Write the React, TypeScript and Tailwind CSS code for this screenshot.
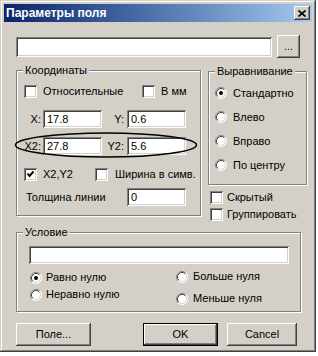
import React from "react";

const raised =
  "shadow-[inset_-1px_-1px_#404040,inset_1px_1px_#fff,inset_-2px_-2px_#808080,inset_2px_2px_#d4d0c8]";
const sunken =
  "shadow-[inset_1px_1px_#808080,inset_-1px_-1px_#fff,inset_2px_2px_#404040,inset_-2px_-2px_#d4d0c8]";

const CheckBox = ({ checked = false }: { checked?: boolean }) => (
  <div className={`relative w-[13px] h-[13px] shrink-0 bg-white ${sunken}`}>
    {checked && (
      <svg width="13" height="13" className="absolute left-0 top-0">
        <polyline points="3.5,5.5 5.5,8 9.5,3.5" fill="none" stroke="#000" strokeWidth="2" />
      </svg>
    )}
  </div>
);

const Radio = ({ checked = false }: { checked?: boolean }) => (
  <svg width="12" height="12" className="shrink-0">
    <circle cx="6" cy="6" r="5.5" fill="#fff" />
    <path d="M2.11 9.89 A5.5 5.5 0 0 1 9.89 2.11" fill="none" stroke="#808080" />
    <path d="M9.89 2.11 A5.5 5.5 0 0 1 2.11 9.89" fill="none" stroke="#fff" />
    <path d="M2.82 9.18 A4.5 4.5 0 0 1 9.18 2.82" fill="none" stroke="#404040" />
    <path d="M9.18 2.82 A4.5 4.5 0 0 1 2.82 9.18" fill="none" stroke="#d4d0c8" />
    {checked && <circle cx="6" cy="6" r="2" fill="#000" />}
  </svg>
);

const Field = ({ value = "", className = "" }: { value?: string; className?: string }) => (
  <div className={`h-[18px] shrink-0 bg-white pl-[4px] flex items-center leading-[13px] ${sunken} ${className}`}>
    {value}
  </div>
);

const Group = ({
  title,
  className,
  children,
}: {
  title: string;
  className: string;
  children?: React.ReactNode;
}) => (
  <div
    className={`relative shrink-0 border border-[#808080] shadow-[inset_1px_1px_#fff,1px_1px_#fff] ${className}`}
  >
    <span className="absolute left-[6px] -top-[8px] px-[2px] bg-[#d4d0c8] leading-[14px]">{title}</span>
    {children}
  </div>
);

const Button = ({
  label,
  className = "",
  primary = false,
}: {
  label: string;
  className?: string;
  primary?: boolean;
}) => (
  <div className={`h-[23px] shrink-0 ${primary ? "border border-black" : ""} ${className}`}>
    <div className={`w-full h-full flex items-center justify-center ${raised}`}>{label}</div>
  </div>
);

export default function App() {
  return (
    <div className="min-h-screen bg-white font-['Liberation_Sans',Arial,sans-serif] text-[11px] text-black whitespace-nowrap">
      <div
        className={`w-[316px] h-[352px] bg-[#d4d0c8] p-[4px] flex flex-col shadow-[inset_-1px_-1px_#404040,inset_1px_1px_#d4d0c8,inset_-2px_-2px_#808080,inset_2px_2px_#fff]`}
      >
        {/* title bar */}
        <div className="h-[18px] shrink-0 flex items-center justify-between pl-[2px] bg-gradient-to-r from-[#0a246a] to-[#a6caf0]">
          <span className="text-white font-bold text-[12px] leading-[14px]">Параметры поля</span>
          <div className={`w-[16px] h-[14px] mr-[2px] bg-[#d4d0c8] flex items-center justify-center ${raised}`}>
            <svg width="8" height="7">
              <path d="M0.5 0.5 L7.5 6.5 M7.5 0.5 L0.5 6.5" stroke="#000" strokeWidth="1.6" />
            </svg>
          </div>
        </div>

        <div className="flex flex-col px-[12px]">
          {/* name row */}
          <div className="flex items-center mt-[13px]">
            <Field className="w-[256px] h-[20px]" />
            <Button label="..." className="w-[23px] h-[21px] ml-[5px]" />
          </div>

          <div className="flex mt-[12px]">
            <Group title="Координаты" className="w-[185px] h-[146px] pl-[7px] pt-[14px]">
              <div className="flex items-center h-[13px]">
                <div className="flex items-center gap-[6px] w-[118px] shrink-0">
                  <CheckBox />
                  <span>Относительные</span>
                </div>
                <div className="flex items-center gap-[6px]">
                  <CheckBox />
                  <span>В мм</span>
                </div>
              </div>

              <div className="flex items-center mt-[12px]">
                <span className="w-[17px] text-right mr-[2px] shrink-0">X:</span>
                <Field value="17.8" className="w-[59px]" />
                <span className="w-[22px] text-right mr-[3px] shrink-0">Y:</span>
                <Field value="0.6" className="w-[59px]" />
              </div>
              <div className="flex items-center mt-[9px]">
                <span className="w-[17px] text-right mr-[2px] shrink-0">X2:</span>
                <Field value="27.8" className="w-[59px]" />
                <span className="w-[22px] text-right mr-[3px] shrink-0">Y2:</span>
                <Field value="5.6" className="w-[59px]" />
              </div>

              <div className="flex items-center h-[13px] mt-[13px]">
                <div className="flex items-center gap-[6px] w-[71px] shrink-0">
                  <CheckBox checked />
                  <span>X2,Y2</span>
                </div>
                <div className="flex items-center gap-[7px]">
                  <CheckBox />
                  <span>Ширина в симв.</span>
                </div>
              </div>

              <div className="flex items-center mt-[7px]">
                <span className="w-[103px] pl-[2px] shrink-0">Толщина линии</span>
                <Field value="0" className="w-[59px]" />
              </div>

              <svg width="190" height="30" className="absolute -left-[4px] top-[59px] pointer-events-none">
                <ellipse cx="93" cy="15" rx="90.5" ry="12" fill="none" stroke="#000" strokeWidth="1.5" />
              </svg>
            </Group>

            <div className="flex flex-col ml-[7px]">
              <Group title="Выравнивание" className="w-[99px] h-[114px] mt-[1px] pt-[9px] pl-[6px]">
                {[
                  ["Стандартно", true],
                  ["Влево", false],
                  ["Вправо", false],
                  ["По центру", false],
                ].map(([label, on]) => (
                  <div key={label as string} className="flex items-center gap-[6px] h-[24px]">
                    <Radio checked={on as boolean} />
                    <span>{label as string}</span>
                  </div>
                ))}
              </Group>
              <div className="flex flex-col gap-[4px] mt-[6px] pl-[2px]">
                <div className="flex items-center gap-[4px] h-[13px]">
                  <CheckBox />
                  <span>Скрытый</span>
                </div>
                <div className="flex items-center gap-[4px] h-[13px]">
                  <CheckBox />
                  <span>Группировать</span>
                </div>
              </div>
            </div>
          </div>

          <Group title="Условие" className="w-[285px] h-[80px] mt-[11px] pt-[13px] pl-[12px]">
            <Field className="w-[260px]" />
            <div className="flex mt-[5px] pl-[1px]">
              <div className="flex flex-col w-[146px] shrink-0">
                <div className="flex items-center gap-[4px] h-[17px]">
                  <Radio checked />
                  <span>Равно нулю</span>
                </div>
                <div className="flex items-center gap-[4px] h-[17px]">
                  <Radio />
                  <span>Неравно нулю</span>
                </div>
              </div>
              <div className="flex flex-col gap-[5px] -mt-[1px]">
                <div className="flex items-center gap-[5px] h-[17px]">
                  <Radio />
                  <span>Больше нуля</span>
                </div>
                <div className="flex items-center gap-[5px] h-[17px]">
                  <Radio />
                  <span>Меньше нуля</span>
                </div>
              </div>
            </div>
          </Group>

          <div className="flex mt-[11px]">
            <Button label="Поле..." className="w-[75px]" />
            <Button label="OK" primary className="w-[75px] ml-[52px]" />
            <Button label="Cancel" className="w-[70px] ml-[9px]" />
          </div>
        </div>
      </div>
    </div>
  );
}
